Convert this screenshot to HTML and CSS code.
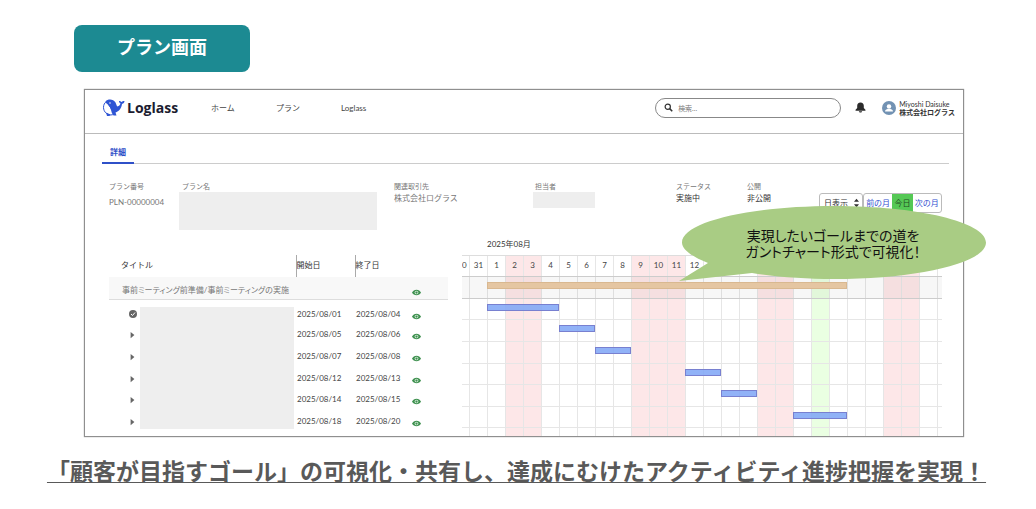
FILE: index.html
```html
<!DOCTYPE html>
<html lang="ja">
<head>
<meta charset="utf-8">
<title>プラン画面</title>
<link rel="stylesheet" href="styles.css">
</head>
<body>
<svg class="defs" aria-hidden="true">
  <symbol id="eye" viewBox="0 0 16 12"><path fill="#3f9150" d="M8 1C4.500 1 1.500 3 0 6c1.500 3 4.500 5 8 5s6.500-2 8-5C14.500 3 11.500 1 8 1z"/><circle cx="8" cy="6" r="3.300" fill="#d5ead8"/><circle cx="8" cy="6" r="2" fill="#3f9150"/></symbol>
  <symbol id="play" viewBox="0 0 8 12"><path fill="#666" d="M1 1v10l6-5z"/></symbol>
</svg>
<main class="slide">
  <h1 class="badge">プラン画面</h1>

  <section class="panel">
    <header class="topbar">
      <div class="logo">
        <svg class="whale" viewBox="0 0 44 34" aria-hidden="true">
          <path fill="#fff" stroke="#2f55d4" stroke-width="2" d="M8 5C0 10 0 23 8 29c5 4 12 4 16 0L14 14z"/>
          <path fill="#2f55d4" d="M6 5C11-1 22 0 26 7c2 4 2 7 4 8 3-1 5-3 6-6-2-1-3-3-3-5 2 0 4 1 5 2 1-1 3-2 6-2 0 3-2 5-5 6-1 8-6 15-13 17l2 6h-6l-2-3C17 27 18 15 7 8z"/>
          <path fill="#2f55d4" d="M7 27l9 4-2 3H9z"/>
          <circle cx="15" cy="8" r="1.500" fill="#fff"/>
        </svg>
        <span>Loglass</span>
      </div>
      <nav class="nav">
        <a href="#home">ホーム</a>
        <a href="#plan">プラン</a>
        <a href="#loglass">Loglass</a>
      </nav>
      <label class="search">
        <svg viewBox="0 0 12 12" aria-hidden="true"><circle cx="5" cy="5" r="3.500" fill="none" stroke="#333" stroke-width="1.600"/><path d="M7.500 7.500l3.500 3.500" stroke="#333" stroke-width="2"/></svg>
        <input type="search" placeholder="検索..." aria-label="検索">
      </label>
      <button class="bell" type="button" aria-label="通知">
        <svg viewBox="0 0 20 20"><path fill="#2b2b2b" d="M10 1C6 1 4 4 4 7v4l-3 3v2h18v-2l-3-3V7c0-3-2-6-6-6zM7 17h6c0 3-6 3-6 0z"/></svg>
      </button>
      <div class="user">
        <svg viewBox="0 0 28 28" aria-hidden="true"><circle cx="14" cy="14" r="14" fill="#7292b3"/><circle cx="14" cy="11" r="4.500" fill="#fff"/><path fill="#fff" d="M6 21c0-4 4-5 8-5s8 1 8 5z"/></svg>
        <div><span>Miyoshi Daisuke</span><b>株式会社ログラス</b></div>
      </div>
    </header>

    <div class="tabs"><a class="tab" href="#detail">詳細</a></div>

    <div class="fields">
      <div class="field"><span class="label">プラン番号</span><span class="value value-low">PLN-00000004</span></div>
      <div class="field"><span class="label">プラン名</span><span class="mask mask-name"></span></div>
      <div class="field"><span class="label">関連取引先</span><span class="value">株式会社ログラス</span></div>
      <div class="field"><span class="label">担当者</span><span class="mask mask-owner"></span></div>
      <div class="field"><span class="label">ステータス</span><span class="value dark">実施中</span></div>
      <div class="field"><span class="label">公開</span><span class="value dark">非公開</span></div>
      <div class="controls">
        <div class="select">
          <select aria-label="表示単位"><option>日表示</option></select>
          <svg viewBox="0 0 8 16" aria-hidden="true"><path fill="#333" d="M4 1l4 5H0zM4 15l4-5H0z"/></svg>
        </div>
        <div class="months">
          <button type="button">前の月</button><button class="today" type="button">今日</button><button type="button">次の月</button>
        </div>
      </div>
    </div>

    <div class="plan">
      <table class="tasks">
        <colgroup><col class="c-icon"><col class="c-title"><col class="c-date"><col class="c-end"><col class="c-eye"></colgroup>
        <thead><tr><th colspan="2" class="t-title">タイトル</th><th class="t-date">開始日</th><th class="t-date">終了日</th><th></th></tr></thead>
        <tbody>
          <tr class="summary"><td colspan="4">事前ミーティング前準備/事前ミーティングの実施</td><td class="eye"><svg><use href="#eye"/></svg></td></tr>
          <tr><td class="mark"><svg viewBox="0 0 16 16"><circle cx="8" cy="8" r="8" fill="#666"/><path d="M4 8l3 3 5-6" fill="none" stroke="#fff" stroke-width="2"/></svg></td><td rowspan="6" class="hidden-titles"><div class="mask mask-titles"></div></td><td>2025/08/01</td><td>2025/08/04</td><td class="eye"><svg><use href="#eye"/></svg></td></tr>
          <tr><td class="mark"><svg class="play"><use href="#play"/></svg></td><td>2025/08/05</td><td>2025/08/06</td><td class="eye"><svg><use href="#eye"/></svg></td></tr>
          <tr><td class="mark"><svg class="play"><use href="#play"/></svg></td><td>2025/08/07</td><td>2025/08/08</td><td class="eye"><svg><use href="#eye"/></svg></td></tr>
          <tr><td class="mark"><svg class="play"><use href="#play"/></svg></td><td>2025/08/12</td><td>2025/08/13</td><td class="eye"><svg><use href="#eye"/></svg></td></tr>
          <tr><td class="mark"><svg class="play"><use href="#play"/></svg></td><td>2025/08/14</td><td>2025/08/15</td><td class="eye"><svg><use href="#eye"/></svg></td></tr>
          <tr><td class="mark"><svg class="play"><use href="#play"/></svg></td><td>2025/08/18</td><td>2025/08/20</td><td class="eye"><svg><use href="#eye"/></svg></td></tr>
        </tbody>
      </table>

      <div class="chart">
        <div class="month">2025年08月</div>
        <div class="days">
          <div class="day cut"><span>0</span></div><div class="day">31</div>
          <div class="day">1</div><div class="day off">2</div><div class="day off">3</div><div class="day">4</div><div class="day">5</div><div class="day">6</div><div class="day">7</div><div class="day">8</div><div class="day off">9</div><div class="day off">10</div><div class="day off">11</div><div class="day">12</div><div class="day">13</div><div class="day">14</div><div class="day">15</div><div class="day off">16</div><div class="day off">17</div><div class="day">18</div><div class="day now">19</div><div class="day">20</div><div class="day">21</div><div class="day">22</div><div class="day off">23</div><div class="day off">24</div><div class="day">25</div><div class="day"></div>
        </div>
        <div class="row r0"></div><div class="row r1"></div><div class="row r2"></div><div class="row r3"></div><div class="row r4"></div><div class="row r5"></div><div class="row r6"></div><div class="row r7"></div>
        <div class="bar total r1 d1-20"></div>
        <div class="bar r2 d1-4"></div>
        <div class="bar r3 d5-6"></div>
        <div class="bar r4 d7-8"></div>
        <div class="bar r5 d12-13"></div>
        <div class="bar r6 d14-15"></div>
        <div class="bar r7 d18-20"></div>
      </div>
    </div>

    <aside class="callout">
      <svg viewBox="0 0 308 76" preserveAspectRatio="none" aria-hidden="true"><path fill="#a9cc84" d="M0 75L29 57C14 51 3 44 3 36.500C3 16 71 0 155 0s152 16 152 36.500S239 73 155 73c-30 0-58-2-82-6z"/></svg>
      <p>実現したいゴールまでの道を<br>ガントチャート形式で可視化！</p>
    </aside>
  </section>

  <p class="headline">「顧客が目指すゴール」の可視化・共有し、達成にむけたアクティビティ進捗把握を実現！</p>
</main>
</body>
</html>
```
FILE: styles.css
```css
* { box-sizing: border-box; }
body { margin: 0; background: #fff; color: #444; font: 8px/10px Lato, "Noto Sans CJK JP", sans-serif; }
button, input, select { font: inherit; color: inherit; margin: 0; padding: 0; border: 0; background: none; }
a { color: inherit; text-decoration: none; }
svg { display: block; }
.defs { position: absolute; width: 0; height: 0; }
.slide { padding: 25px 0 0; }
.badge { width: 176px; margin: 0 0 17px 74px; padding: 10px 0 13px; border-radius: 8px; background: #1c8a92; color: #fff; font-size: 18px; line-height: 24px; font-weight: 700; text-align: center; }
.panel { position: relative; margin: 0 72px 0 84px; border: 1px solid #8f8f8f; box-shadow: 0 0 1px #8f8f8f; }

.topbar { display: flex; align-items: center; height: 44px; padding: 0 8px 8px 17px; border-bottom: 1px solid #bbb; }
.logo { display: flex; align-items: center; gap: 2px; width: 109px; color: #1c1c30; font: 700 14px/18px "Open Sans", "Noto Sans", sans-serif; }
.whale { width: 23px; height: 17px; }
.nav { display: flex; flex: 1; }
.nav a { width: 65px; }
.search { display: flex; align-items: center; gap: 5px; width: 186px; height: 20px; padding: 0 8px; border: 1px solid #888; border-radius: 10px; }
.search svg { width: 9px; height: 9px; }
.search input { flex: 1; min-width: 0; font-size: 7px; outline: 0; }
.search input::placeholder { color: #777; }
.bell { margin: 0 16px 0 14px; }
.bell svg { width: 11px; height: 11px; }
.user { display: flex; align-items: center; gap: 3px; color: #333; font-size: 7px; line-height: 8px; white-space: nowrap; }
.user svg { width: 14px; height: 14px; }
.user span, .user b { display: block; }

.tabs { display: flex; margin: 13px 14px 0 17px; border-bottom: 1px solid #ccc; }
.tab { width: 32px; margin-bottom: -1px; padding-bottom: 5px; border-bottom: 2px solid #2f50c8; color: #2f50c8; font-weight: 700; text-align: center; }

.fields { display: grid; grid-template-columns: 73fr 212fr 141fr 141fr 71fr 72fr 123fr; height: 56px; margin: 0 21px 0 24px; padding-top: 17px; }
.field { display: flex; flex-direction: column; min-width: 0; color: #777; white-space: nowrap; }
.label { height: 12px; font-size: 7px; }
.value-low { margin-top: 4px; }
.dark { color: #333; }
.mask { display: block; background: #eee; }
.mask-name { width: 198px; height: 38px; margin: -1px 0 0 -3px; }
.mask-owner { width: 62px; height: 16px; margin: -1px 0 0 -2px; }
.controls { display: grid; grid-template-columns: 44fr 79fr; align-items: start; margin-top: 12px; }
.select, .months { display: flex; height: 20px; min-width: 0; border: 1px solid #bbb; border-radius: 3px; }
.select { align-items: center; padding: 0 3px 0 4px; color: #333; }
.select select { flex: 1 1 0; width: 0; min-width: 0; appearance: none; }
.select svg { width: 5px; height: 10px; }
.months button { flex: 29 1 0; min-width: 0; color: #3350d0; white-space: nowrap; }
.months .today { flex: 21 1 0; background: #55c855; color: #244c24; }

.plan { display: flex; align-items: flex-start; gap: 14px; margin: 0 21px 0 24px; padding-top: 16px; }
.tasks { flex: 339 1 0; width: 0; margin-top: 19px; border-collapse: collapse; table-layout: fixed; }
.c-icon { width: 31px; }
.c-title { width: 156px; }
.c-date { width: 59px; }
.c-end { width: 56px; }
.tasks th, .tasks td { padding: 9px 0 0 1px; vertical-align: top; text-align: left; white-space: nowrap; }
.tasks th { padding-top: 5px; font-weight: 400; color: #333; }
.tasks tr { height: 22px; }
.tasks tbody tr:nth-child(3n+2) { height: 21px; }
.tasks .t-title { padding-left: 12px; }
.tasks .t-date { border-left: 1px solid #aaa; padding-left: 0; }
.tasks .summary td { padding-top: 8px; background: #f8f8f8; border-bottom: 1px solid #ddd; color: #777; }
.tasks .summary td:first-child { padding-left: 13px; font-feature-settings: "palt"; }
.tasks .hidden-titles { padding: 7px 2px 0 0; }
.mask-titles { height: 122px; }
.eye svg { width: 9px; height: 7px; margin-top: 4px; }
.mark svg { width: 8px; height: 8px; margin: 1px 0 0 19px; }
.mark .play { width: 5px; margin: 2px 0 0 20px; }

.chart { flex: 480 1 0; display: grid; grid-template-columns: 7fr repeat(26, 18fr) 5fr; grid-template-rows: 19px 22px 22px 21px 22px 22px 21px 22px 21px 8px; overflow: hidden; }
.month { grid-area: 1 / 3 / 2 / 9; padding-top: 3px; color: #333; }
.days { grid-area: 2 / 1 / -1 / -1; display: grid; grid-template-columns: subgrid; }
.day { min-width: 0; padding-top: 5px; border-left: 1px solid #e6e6e6; text-align: center; color: #444; }
.day.cut { border: 0; text-align: left; }
.off { background: #fde7e8; }
.now { background: #eaffe2; }
.row { grid-column: 1 / -1; border-bottom: 1px solid #e6e6e6; }
.row.r0 { border-top: 1px solid #ddd; border-bottom-color: #ccc; }
.row.r1 { background: rgba(0, 0, 0, 0.03); border-bottom-color: #ccc; }
.r0 { grid-row: 2; }
.r1 { grid-row: 3; }
.r2 { grid-row: 4; }
.r3 { grid-row: 5; }
.r4 { grid-row: 6; }
.r5 { grid-row: 7; }
.r6 { grid-row: 8; }
.r7 { grid-row: 9; }
.bar { height: 7px; margin-top: 5px; border: 1px solid #7880d0; background: rgba(126, 164, 246, 0.85); }
.bar.total { border-color: #d9b890; background: #e5c6a2; }
.d1-20 { grid-column: 3 / 23; }
.d1-4 { grid-column: 3 / 7; }
.d5-6 { grid-column: 7 / 9; }
.d7-8 { grid-column: 9 / 11; }
.d12-13 { grid-column: 14 / 16; }
.d14-15 { grid-column: 16 / 18; }
.d18-20 { grid-column: 20 / 23; }

.callout { position: absolute; top: 116px; right: -24px; width: 308px; height: 76px; color: #111; font-size: 14px; line-height: 16px; }
.callout svg { position: absolute; inset: 0; width: 100%; height: 100%; }
.callout p { position: relative; margin: 0; padding-top: 22px; text-align: center; font-feature-settings: "palt"; }

.headline { margin: 17px 0 0; padding-right: 3px; color: #595959; font-size: 23px; line-height: 34px; font-weight: 700; text-align: center; white-space: nowrap; text-decoration: underline 1px; text-underline-offset: 2px; text-decoration-skip-ink: none; }
```
